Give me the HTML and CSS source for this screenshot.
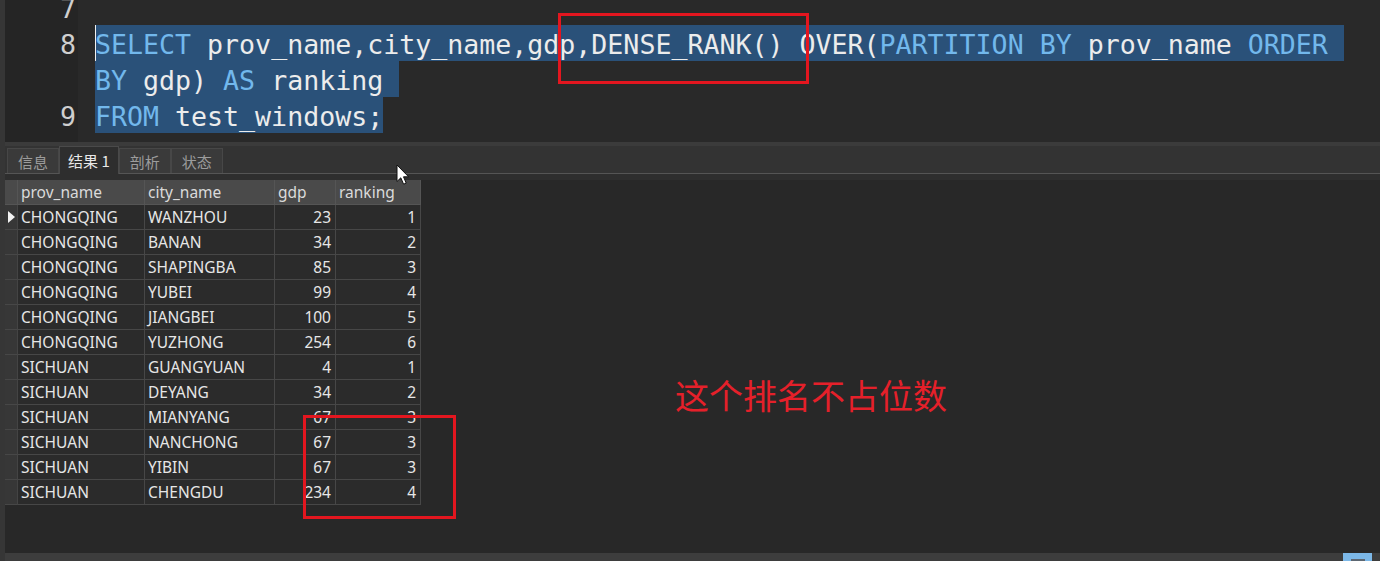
FILE: index.html
```html
<!DOCTYPE html>
<html lang="zh">
<head>
<meta charset="utf-8">
<title>DENSE_RANK</title>
<link rel="stylesheet" href="styles.css">
</head>
<body>
<div class="window">
  <div class="editor">
    <div class="gutter">
      <div class="ln">7</div>
      <div class="ln ln-wrap">8</div>
      <div class="ln">9</div>
    </div>
    <div class="code">
      <div class="line"> </div>
      <div class="line"><span class="sel caret"><span class="kw">SELECT</span> prov_name,city_name,gdp,DENSE_RANK() OVER(<span class="kw">PARTITION BY</span> prov_name <span class="kw">ORDER</span> </span></div>
      <div class="line"><span class="sel"><span class="kw">BY</span> gdp) <span class="kw">AS</span> ranking </span></div>
      <div class="line"><span class="sel"><span class="kw">FROM</span> test_windows;</span></div>
    </div>
  </div>

  <div class="results-head">
    <div class="tabstrip">
      <div class="tab">信息</div>
      <div class="tab active">结果 1</div>
      <div class="tab">剖析</div>
      <div class="tab">状态</div>
    </div>
    <div class="tabline"></div>
    <div class="tabgap"></div>
  </div>

  <div class="grid-area">
    <table class="grid">
      <thead>
        <tr><th class="ind"></th><th class="c-prov">prov_name</th><th class="c-city">city_name</th><th class="c-gdp">gdp</th><th class="c-rank">ranking</th></tr>
      </thead>
      <tbody>
        <tr><td class="ind"><svg class="rowptr" width="7" height="12" viewBox="0 0 7 12"><polygon points="0,0 7,6 0,12" fill="#f2f2f2"/></svg></td><td>CHONGQING</td><td>WANZHOU</td><td class="num">23</td><td class="num">1</td></tr>
        <tr><td class="ind"></td><td>CHONGQING</td><td>BANAN</td><td class="num">34</td><td class="num">2</td></tr>
        <tr><td class="ind"></td><td>CHONGQING</td><td>SHAPINGBA</td><td class="num">85</td><td class="num">3</td></tr>
        <tr><td class="ind"></td><td>CHONGQING</td><td>YUBEI</td><td class="num">99</td><td class="num">4</td></tr>
        <tr><td class="ind"></td><td>CHONGQING</td><td>JIANGBEI</td><td class="num">100</td><td class="num">5</td></tr>
        <tr><td class="ind"></td><td>CHONGQING</td><td>YUZHONG</td><td class="num">254</td><td class="num">6</td></tr>
        <tr><td class="ind"></td><td>SICHUAN</td><td>GUANGYUAN</td><td class="num">4</td><td class="num">1</td></tr>
        <tr><td class="ind"></td><td>SICHUAN</td><td>DEYANG</td><td class="num">34</td><td class="num">2</td></tr>
        <tr><td class="ind"></td><td>SICHUAN</td><td>MIANYANG</td><td class="num">67</td><td class="num">3</td></tr>
        <tr><td class="ind"></td><td>SICHUAN</td><td>NANCHONG</td><td class="num">67</td><td class="num">3</td></tr>
        <tr><td class="ind"></td><td>SICHUAN</td><td>YIBIN</td><td class="num">67</td><td class="num">3</td></tr>
        <tr><td class="ind"></td><td>SICHUAN</td><td>CHENGDU</td><td class="num">234</td><td class="num">4</td></tr>
      </tbody>
    </table>
  </div>

  <div class="statusbar">
    <div class="thumb"><div class="thumb-inner"></div></div>
  </div>
</div>

<div class="mark mark-func"></div>
<div class="mark mark-rank"></div>
<div class="note">这个排名不占位数</div>
<svg class="pointer" width="14" height="22" viewBox="0 0 14 22">
  <path d="M1 1 L1 17.5 L4.8 13.8 L7.6 20.2 L10.2 19.1 L7.5 12.8 L12.6 12.8 Z" fill="#ffffff" stroke="#111111" stroke-width="1" stroke-linejoin="round"/>
</svg>
</body>
</html>
```

FILE: styles.css
```css
html, body {
  margin: 0;
  padding: 0;
}

body {
  width: 1380px;
  height: 561px;
  overflow: hidden;
  background: #282828;
  position: relative;
}

.window {
  display: flex;
  flex-direction: column;
  height: 561px;
  border-left: 5px solid #363636;
  box-sizing: border-box;
}

/* ---------- editor ---------- */
.editor {
  height: 142px;
  flex: none;
  display: flex;
  overflow: hidden;
  background: #292929;
  font-family: "DejaVu Sans Mono", "Liberation Mono", monospace;
  font-size: 26.6px;
  line-height: 36px;
}

.gutter {
  width: 73px;
  flex: none;
  background: #252525;
  margin-top: -11px;
  text-align: right;
  color: #cfcfcf;
  box-sizing: border-box;
  padding-right: 2px;
}

.ln {
  height: 36px;
  box-sizing: border-box;
  padding-top: 3px;
  line-height: 33px;
}

.ln-wrap {
  height: 72px;
}

.code {
  flex: 1;
  margin-top: -11px;
  padding-left: 17px;
  color: #ececec;
}

.line {
  height: 36px;
  white-space: pre;
}

.sel {
  display: inline-block;
  height: 36px;
  box-sizing: border-box;
  padding-top: 3px;
  line-height: 33px;
  background: #2a5179;
  vertical-align: top;
}

.caret {
  box-shadow: inset 1px 0 0 #f0f0f0;
}

.kw {
  color: #72b8ec;
}

/* ---------- result tabs ---------- */
.results-head {
  flex: none;
  height: 38px;
  display: flex;
  flex-direction: column;
  border-top: 4px solid #3b3b3b;
  box-sizing: border-box;
  font-family: "Noto Sans CJK SC", "Noto Sans", sans-serif;
  font-size: 15px;
}

.tabstrip {
  height: 27px;
  display: flex;
  align-items: flex-end;
  padding-left: 2px;
  background: #333333;
}

.tab {
  height: 25px;
  box-sizing: border-box;
  padding: 0 10px;
  display: flex;
  align-items: center;
  background: #3a3a3a;
  border: 1px solid #474747;
  border-bottom: none;
  color: #9c9c9c;
}

.tab.active {
  height: 28px;
  margin-bottom: -1px;
  padding: 0 8px;
  background: #2e2e2e;
  border-color: #4a4a4a;
  color: #e8e8e8;
  position: relative;
  z-index: 1;
}

.tabline {
  height: 1px;
  background: #555555;
}

.tabgap {
  height: 6px;
  background: #2e2e2e;
}

/* ---------- grid ---------- */
.grid-area {
  flex: 1;
  background: #282828;
}

.grid {
  border-collapse: separate;
  border-spacing: 0;
  table-layout: fixed;
  font-family: "Noto Sans", "Open Sans", sans-serif;
  font-size: 15.5px;
}

.grid th,
.grid td {
  box-sizing: border-box;
  height: 25px;
  padding: 0 3px;
  line-height: 24px;
  border-right: 1px solid #474747;
  border-bottom: 1px solid #474747;
  white-space: nowrap;
  overflow: hidden;
  text-align: left;
  font-weight: normal;
}

.grid th {
  background: #4a4a4a;
  color: #dadada;
  border-color: #555555;
}

.grid td {
  background: #2b2b2b;
  color: #e6e6e6;
}

.grid .ind {
  width: 13px;
  padding: 0;
}

.grid td.ind {
  background: #373737;
  border-right-color: #444444;
  text-align: center;
}

.rowptr {
  display: block;
  margin: 0 0 0 3px;
}

.c-prov { width: 127px; }
.c-city { width: 130px; }
.c-gdp { width: 61px; }
.c-rank { width: 85px; }

.grid td.num {
  text-align: right;
  padding-right: 4px;
}

/* ---------- bottom bar ---------- */
.statusbar {
  flex: none;
  height: 8px;
  background: #3d3d3d;
  display: flex;
  justify-content: flex-end;
  padding-right: 8px;
}

.thumb {
  width: 29px;
  height: 8px;
  background: #7cb8e8;
  display: flex;
  justify-content: center;
  align-items: flex-end;
}

.thumb-inner {
  width: 14px;
  height: 2px;
  background: #5d6772;
}

/* ---------- overlays (annotations) ---------- */
.mark {
  position: absolute;
  border: 3px solid #e3161f;
  box-sizing: border-box;
}

.mark-func {
  left: 558px;
  top: 13px;
  width: 251px;
  height: 71px;
}

.mark-rank {
  left: 303px;
  top: 415px;
  width: 153px;
  height: 104px;
}

.note {
  position: absolute;
  left: 675px;
  top: 378px;
  font-family: "Noto Sans CJK SC", sans-serif;
  font-size: 34px;
  line-height: 34px;
  color: #e5202a;
  white-space: nowrap;
}

.pointer {
  position: absolute;
  left: 396px;
  top: 164px;
}
```
